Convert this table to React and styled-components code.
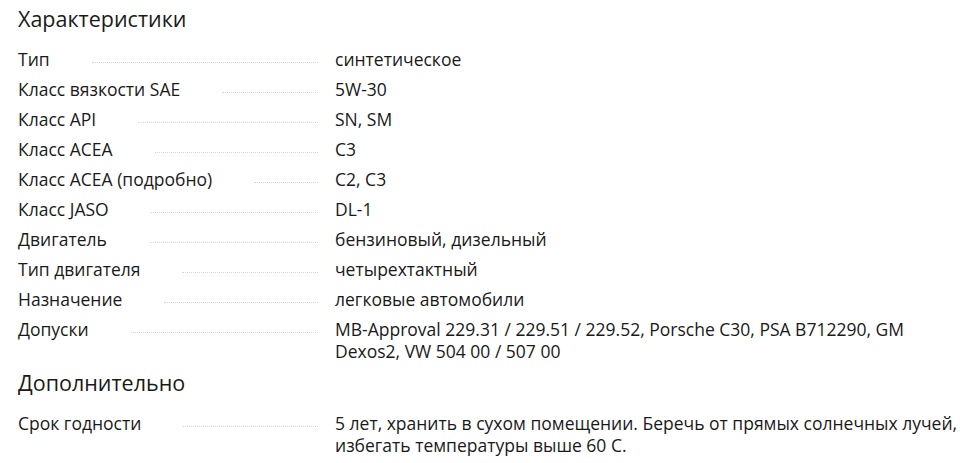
import React from "react";
import styled, { createGlobalStyle } from "styled-components";

const Global = createGlobalStyle`
    body {
        margin: 0;
        background: #fff;
        font-family: "Open Sans", "Liberation Sans", sans-serif;
        color: #1a1a1a;
    }
`;

const Page = styled.div`
    padding: 5px 0 0 18px;
    width: 942px;
`;

const Title = styled.h2`
    margin: ${({first}) => first ? '0' : '3px'} 0 11px;
    font-size: 21.5px;
    line-height: 28px;
    font-weight: 400;
`;

const List = styled.dl`
    margin: 0;
`;

const Row = styled.div`
    display: grid;
    grid-template-columns: 300px 1fr;
    column-gap: 17px;
    padding: 4px 0;
    font-size: 17.5px;
    line-height: 22px;
`;

const Term = styled.dt`
    display: flex;
    align-items: flex-start;
    margin: 0;
`;

const Leader = styled.span`
    flex: 1;
    margin: 0 0 0 42px;
    height: 14px;
    border-bottom: 1px dotted #d6d6d6;
`;

const Value = styled.dd`
    margin: 0;
    max-width: 624px;
`;

const main = [
    ['Тип', 'синтетическое'],
    ['Класс вязкости SAE', '5W-30'],
    ['Класс API', 'SN, SM'],
    ['Класс ACEA', 'C3'],
    ['Класс ACEA (подробно)', 'C2, C3'],
    ['Класс JASO', 'DL-1'],
    ['Двигатель', 'бензиновый, дизельный'],
    ['Тип двигателя', 'четырехтактный'],
    ['Назначение', 'легковые автомобили'],
    ['Допуски', 'MB-Approval 229.31 / 229.51 / 229.52, Porsche C30, PSA B712290, GM Dexos2, VW 504 00 / 507 00'],
];

const extra = [
    ['Срок годности', '5 лет, хранить в сухом помещении. Беречь от прямых солнечных лучей, избегать температуры выше 60 С.'],
];

function Specs({ items }) {
    return (
        <List>
            {items.map(([k, v]) => (
                <Row key={k}>
                    <Term>{k}<Leader /></Term>
                    <Value>{v}</Value>
                </Row>
            ))}
        </List>
    );
}

export default function App() {
    return (
        <Page>
            <Global />
            <Title first>Характеристики</Title>
            <Specs items={main} />
            <Title>Дополнительно</Title>
            <Specs items={extra} />
        </Page>
    );
}
